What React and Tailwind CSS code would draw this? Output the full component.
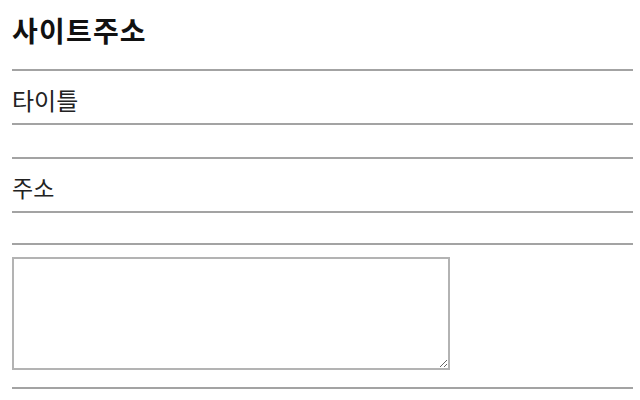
import React from "react";

function Rule() {
  return <div className="h-[2px] w-full bg-[#a3a3a3]" />;
}

export default function App() {
  return (
    <div
      className="flex h-[400px] w-[640px] flex-col bg-white pl-[12px] pr-[7px] text-[#1a1a1a]"
      style={{ fontFamily: '"Noto Sans CJK KR", "Noto Sans", sans-serif' }}
    >
      <div className="flex h-[69px] items-start pt-[10px]">
        <h3 className="text-[28px] font-bold leading-[40px] tracking-[1.2px] text-[#111]">사이트주소</h3>
      </div>
      <Rule />
      <div className="flex h-[52px] items-center pt-[6px]">
        <span className="text-[24px] leading-[32px] text-[#222]">타이틀</span>
      </div>
      <Rule />
      <div className="h-[32px]" />
      <Rule />
      <div className="flex h-[52px] items-center pt-[4px]">
        <span className="text-[23px] leading-[32px] text-[#222]">주소</span>
      </div>
      <Rule />
      <div className="h-[30px]" />
      <Rule />
      <div className="h-[12px]" />
      <textarea
        className="block h-[113px] w-[438px] resize border-2 border-[#b3b3b3] bg-white outline-none"
        defaultValue=""
      />
      <div className="h-[17px]" />
      <Rule />
    </div>
  );
}
